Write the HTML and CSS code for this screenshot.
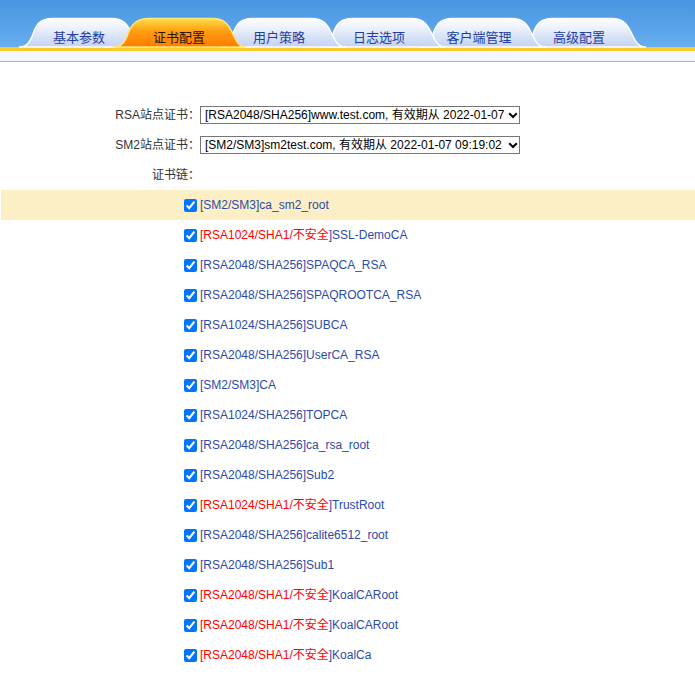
FILE: index.html
```html
<!DOCTYPE html>
<html lang="zh-CN">
<head>
<meta charset="utf-8">
<title>证书配置</title>
<link rel="stylesheet" href="styles.css">
</head>
<body>
<svg class="defs" width="0" height="0" aria-hidden="true">
  <defs>
    <linearGradient id="gIn" x1="0" y1="0" x2="0" y2="1">
      <stop offset="0" stop-color="#ffffff"/>
      <stop offset="1" stop-color="#c3d3f4"/>
    </linearGradient>
    <linearGradient id="gAct" x1="0" y1="0" x2="0" y2="1">
      <stop offset="0" stop-color="#ffdc48"/>
      <stop offset="0.45" stop-color="#ff9c12"/>
      <stop offset="1" stop-color="#ff7c00"/>
    </linearGradient>
  </defs>
</svg>
<div class="header">
  <div class="tab t1"><svg class="tab-bg" viewBox="0 0 134 30"><path class="p-in" d="M5,30 C13,30 16,25 19,17 C22,8 26,1.5 38,1.5 L98,1.5 C109,1.5 113,7 117,15 C121,24 124,30 132,30 Z"/></svg><span>基本参数</span></div>
  <div class="tab t2 active"><svg class="tab-bg" viewBox="0 0 134 30"><path class="p-act" d="M-1,30 C8,30 11,25 14,17 C17,8 22,1.5 34,1.5 L99,1.5 C110,1.5 114,7 118,15 C122,24 125,30 131,30 Z"/></svg><span>证书配置</span></div>
  <div class="tab t3"><svg class="tab-bg" viewBox="0 0 134 30"><path class="p-in" d="M5,30 C13,30 16,25 19,17 C22,8 26,1.5 38,1.5 L98,1.5 C109,1.5 113,7 117,15 C121,24 124,30 132,30 Z"/></svg><span>用户策略</span></div>
  <div class="tab t4"><svg class="tab-bg" viewBox="0 0 134 30"><path class="p-in" d="M5,30 C13,30 16,25 19,17 C22,8 26,1.5 38,1.5 L98,1.5 C109,1.5 113,7 117,15 C121,24 124,30 132,30 Z"/></svg><span>日志选项</span></div>
  <div class="tab t5"><svg class="tab-bg" viewBox="0 0 134 30"><path class="p-in" d="M5,30 C13,30 16,25 19,17 C22,8 26,1.5 38,1.5 L98,1.5 C109,1.5 113,7 117,15 C121,24 124,30 132,30 Z"/></svg><span>客户端管理</span></div>
  <div class="tab t6"><svg class="tab-bg" viewBox="0 0 134 30"><path class="p-in" d="M5,30 C13,30 16,25 19,17 C22,8 26,1.5 38,1.5 L98,1.5 C109,1.5 113,7 117,15 C121,24 124,30 132,30 Z"/></svg><span>高级配置</span></div>
</div>
<div class="band"></div>
<div class="strip"></div>

<div class="form">
  <div class="frow">
    <label class="flabel">RSA站点证书：</label>
    <div class="sel-wrap">
      <select class="sel"><option>[RSA2048/SHA256]www.test.com, 有效期从 2022-01-07 09:19:02</option></select>
      <svg class="chev" viewBox="0 0 10 7"><path d="M1.2,1.2 L5,5 L8.8,1.2"/></svg>
    </div>
  </div>
  <div class="frow">
    <label class="flabel">SM2站点证书：</label>
    <div class="sel-wrap">
      <select class="sel"><option>[SM2/SM3]sm2test.com, 有效期从 2022-01-07 09:19:02</option></select>
      <svg class="chev" viewBox="0 0 10 7"><path d="M1.2,1.2 L5,5 L8.8,1.2"/></svg>
    </div>
  </div>
  <div class="frow">
    <label class="flabel">证书链：</label>
  </div>
</div>

<ul class="chain">
  <li class="item hl"><input type="checkbox" checked><span class="txt">[SM2/SM3]ca_sm2_root</span></li>
  <li class="item"><input type="checkbox" checked><span class="txt"><span class="warn">[RSA1024/SHA1/不安全</span>]SSL-DemoCA</span></li>
  <li class="item"><input type="checkbox" checked><span class="txt">[RSA2048/SHA256]SPAQCA_RSA</span></li>
  <li class="item"><input type="checkbox" checked><span class="txt">[RSA2048/SHA256]SPAQROOTCA_RSA</span></li>
  <li class="item"><input type="checkbox" checked><span class="txt">[RSA1024/SHA256]SUBCA</span></li>
  <li class="item"><input type="checkbox" checked><span class="txt">[RSA2048/SHA256]UserCA_RSA</span></li>
  <li class="item"><input type="checkbox" checked><span class="txt">[SM2/SM3]CA</span></li>
  <li class="item"><input type="checkbox" checked><span class="txt">[RSA1024/SHA256]TOPCA</span></li>
  <li class="item"><input type="checkbox" checked><span class="txt">[RSA2048/SHA256]ca_rsa_root</span></li>
  <li class="item"><input type="checkbox" checked><span class="txt">[RSA2048/SHA256]Sub2</span></li>
  <li class="item"><input type="checkbox" checked><span class="txt"><span class="warn">[RSA1024/SHA1/不安全</span>]TrustRoot</span></li>
  <li class="item"><input type="checkbox" checked><span class="txt">[RSA2048/SHA256]calite6512_root</span></li>
  <li class="item"><input type="checkbox" checked><span class="txt">[RSA2048/SHA256]Sub1</span></li>
  <li class="item"><input type="checkbox" checked><span class="txt"><span class="warn">[RSA2048/SHA1/不安全</span>]KoalCARoot</span></li>
  <li class="item"><input type="checkbox" checked><span class="txt"><span class="warn">[RSA2048/SHA1/不安全</span>]KoalCARoot</span></li>
  <li class="item"><input type="checkbox" checked><span class="txt"><span class="warn">[RSA2048/SHA1/不安全</span>]KoalCa</span></li>
</ul>
</body>
</html>
```
FILE: styles.css
```css
html, body {
  margin: 0;
  padding: 0;
  background: #ffffff;
}
body {
  font-family: "Liberation Sans", Arial, "Noto Sans CJK SC", sans-serif;
  font-size: 12px;
  color: #333333;
}
.defs {
  position: absolute;
  width: 0;
  height: 0;
}
.header {
  height: 47px;
  background: linear-gradient(to bottom, #4a95e2 0%, #5aa3ea 60%, #69afef 100%);
  display: flex;
  align-items: flex-end;
  padding-left: 14px;
}
.tab {
  position: relative;
  flex: none;
  width: 130px;
  height: 30px;
  margin-right: -30px;
  box-sizing: border-box;
  padding-top: 10px;
  display: flex;
  justify-content: center;
  align-items: center;
  font-size: 13px;
  color: #1f3d9e;
  font-family: "Noto Sans CJK SC", sans-serif;
}
.tab span {
  position: relative;
  line-height: 16px;
}
.tab-bg {
  position: absolute;
  left: 0;
  top: 0;
  width: 134px;
  height: 30px;
  overflow: visible;
}
.p-in {
  fill: url(#gIn);
  stroke: #ffffff;
  stroke-width: 1.5;
}
.p-act {
  fill: url(#gAct);
  stroke: #ffe872;
  stroke-width: 1.5;
}
.active {
  color: #2a1400;
}
.t1 { z-index: 6; }
.t2 { z-index: 5; }
.t3 { z-index: 4; }
.t4 { z-index: 3; }
.t5 { z-index: 2; }
.t6 { z-index: 1; }
.tab.active { z-index: 10; }

.band {
  height: 4px;
  background: #fdca2e;
}
.strip {
  height: 10px;
  background: #f4f8fe;
  border-bottom: 1px solid #8fb7ef;
}

.form {
  margin-top: 38px;
}
.frow {
  display: flex;
  align-items: center;
  height: 30px;
}
.flabel {
  flex: none;
  width: 200px;
  text-align: right;
  color: #333333;
  line-height: 16px;
}
.sel-wrap {
  position: relative;
  width: 320px;
  height: 18px;
}
.sel {
  appearance: none;
  -webkit-appearance: none;
  display: block;
  width: 320px;
  height: 18px;
  box-sizing: border-box;
  margin: 0;
  padding: 0 12px 0 4px;
  border: 1px solid #767676;
  border-radius: 0;
  background: #ffffff;
  color: #000000;
  font-family: "Liberation Sans", Arial, "Noto Sans CJK SC", sans-serif;
  font-size: 12px;
  line-height: 16px;
}
.chev {
  position: absolute;
  right: 2px;
  top: 6px;
  width: 10px;
  height: 7px;
  pointer-events: none;
}
.chev path {
  fill: none;
  stroke: #000000;
  stroke-width: 2;
}

.chain {
  list-style: none;
  margin: 0;
  padding: 0;
}
.item {
  display: flex;
  align-items: center;
  height: 30px;
  margin-left: 1px;
  padding-left: 183px;
  color: #2c4ba8;
}
.item.hl {
  background: #fdefc5;
}
.item input {
  flex: none;
  width: 13px;
  height: 13px;
  margin: 0 3px 0 0;
}
.txt {
  line-height: 16px;
  height: 16px;
}
.warn {
  color: #ff0000;
}
```
